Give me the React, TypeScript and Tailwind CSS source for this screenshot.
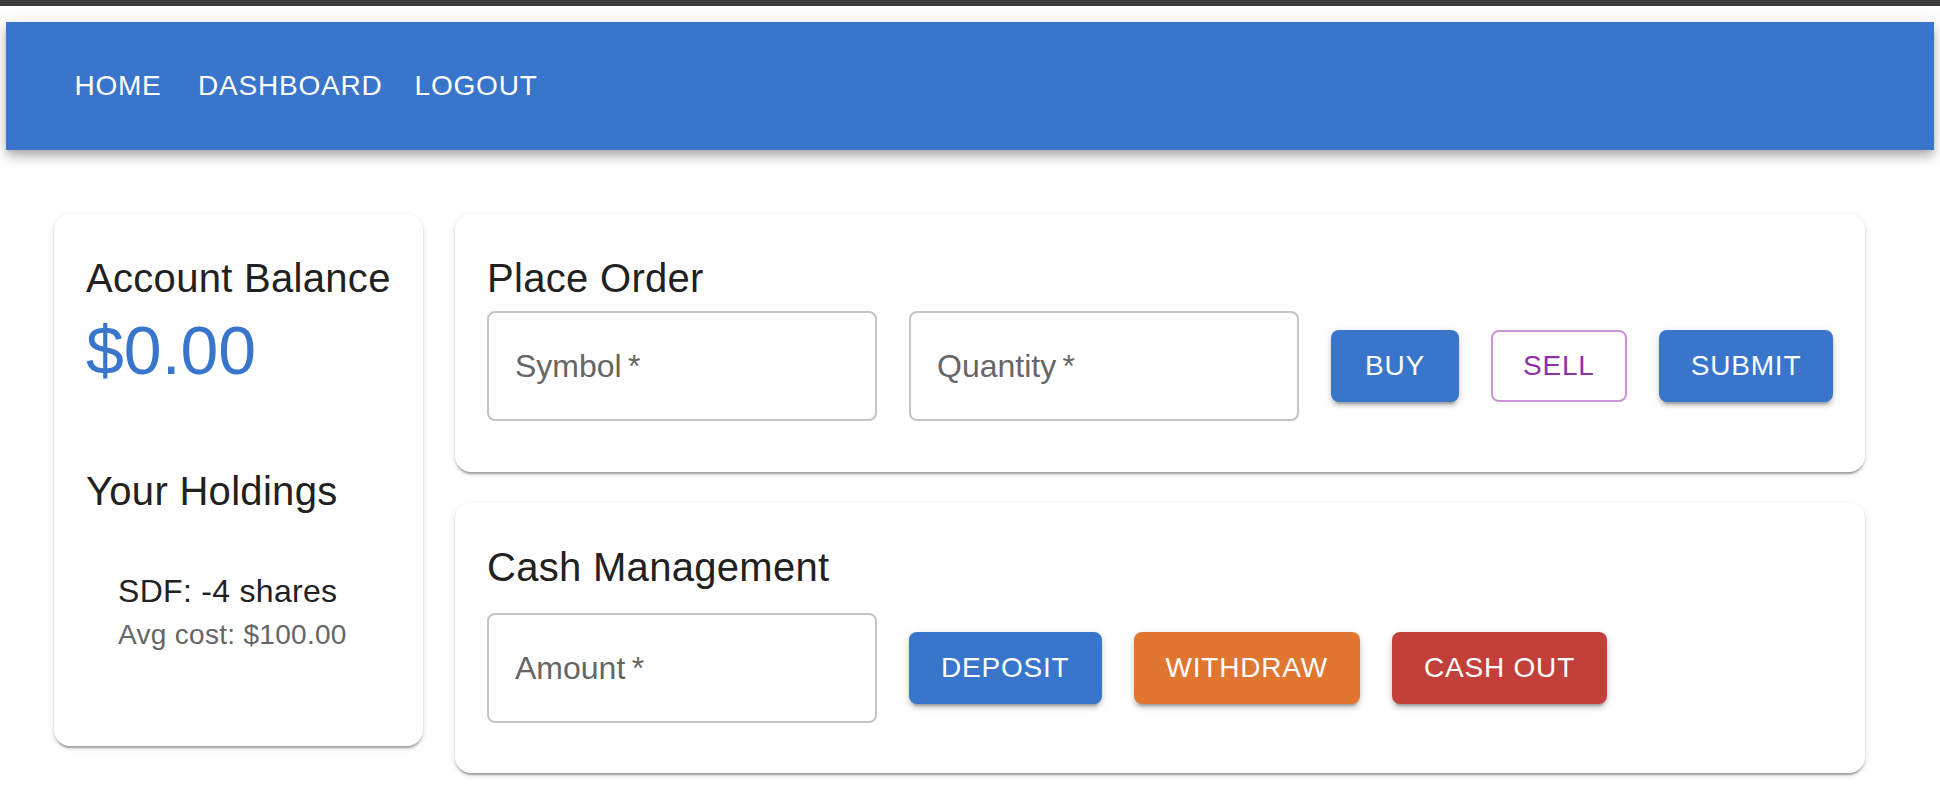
import React from 'react';

const font = { fontFamily: '"Liberation Sans", Arial, Helvetica, sans-serif' };

function NavButton({ label }: { label: string }) {
  return (
    <button className="min-w-[128px] px-4 py-3 text-[28px] leading-[40px] tracking-[0.8px] text-white uppercase text-center">
      {label}
    </button>
  );
}

function Field({ label }: { label: string }) {
  return (
    <div className="w-[390px] h-[110px] shrink-0 rounded-lg border-2 border-[#c4c4c4] flex items-center px-[26px]">
      <span className="text-[32px] text-[#666666]">
        {label}
        {'\u2009*'}
      </span>
    </div>
  );
}

function ActionButton({ label, className }: { label: string; className: string }) {
  return (
    <button
      className={
        'h-[72px] min-w-[128px] px-8 rounded-lg text-[28px] tracking-[0.8px] uppercase shrink-0 ' + className
      }
    >
      {label}
    </button>
  );
}

const raised =
  'text-white shadow-[0_6px_2px_-4px_rgba(0,0,0,0.2),0_4px_4px_0_rgba(0,0,0,0.14),0_2px_10px_0_rgba(0,0,0,0.12)]';

const paper =
  'bg-white rounded-2xl shadow-[0_4px_2px_-2px_rgba(0,0,0,0.2),0_2px_2px_0_rgba(0,0,0,0.14),0_2px_6px_0_rgba(0,0,0,0.12)]';

export default function App() {
  return (
    <div className="min-h-screen bg-white text-[#212121]" style={font}>
      <div className="h-[6px] bg-[#3c3c3c]" />

      <div className="px-[6px] pt-[16px]">
        <header className="h-[128px] bg-[#3875cb] flex items-center px-[48px] shadow-[0_4px_8px_-2px_rgba(0,0,0,0.2),0_8px_10px_0_rgba(0,0,0,0.14),0_2px_20px_0_rgba(0,0,0,0.12)]">
          <NavButton label="Home" />
          <NavButton label="Dashboard" />
          <NavButton label="Logout" />
        </header>

        <main className="px-[48px] pt-[64px] flex items-start gap-8">
          <section className={paper + ' w-[369px] shrink-0 p-8'}>
            <h2 className="text-[40px] leading-[64px] tracking-[0.3px]">Account Balance</h2>
            <div className="text-[68px] leading-[80px] text-[#3875cb]">$0.00</div>

            <h2 className="mt-[69px] text-[40px] leading-[64px] tracking-[0.3px]">Your Holdings</h2>
            <ul className="pl-8 pt-[44px] pb-[59px]">
              <li>
                <div className="text-[32px] leading-[48px] tracking-[0.3px]">SDF: -4 shares</div>
                <div className="text-[28px] leading-[40px] tracking-[0.3px] text-[#666666]">Avg cost: $100.00</div>
              </li>
            </ul>
          </section>

          <div className="w-[1410px] flex flex-col gap-[31px]">
            <section className={paper + ' px-8 pt-8 pb-[51px]'}>
              <h2 className="text-[40px] leading-[64px] tracking-[0.3px]">Place Order</h2>
              <div className="flex items-center gap-8 mt-[1px]">
                <Field label="Symbol" />
                <Field label="Quantity" />
                <ActionButton label="Buy" className={'bg-[#3875cb] ' + raised} />
                <ActionButton
                  label="Sell"
                  className="border-2 border-[#cd93d7] text-[#9030a8] bg-white px-[30px]"
                />
                <ActionButton label="Submit" className={'bg-[#3875cb] ' + raised} />
              </div>
            </section>

            <section className={paper + ' px-8 pt-8 pb-[50px]'}>
              <h2 className="text-[40px] leading-[64px] tracking-[0.3px]">Cash Management</h2>
              <div className="flex items-center gap-8 mt-[14px]">
                <Field label="Amount" />
                <ActionButton label="Deposit" className={'bg-[#3875cb] ' + raised} />
                <ActionButton label="Withdraw" className={'bg-[#e0762f] ' + raised} />
                <ActionButton label="Cash Out" className={'bg-[#c3403a] ' + raised} />
              </div>
            </section>
          </div>
        </main>
      </div>
    </div>
  );
}
